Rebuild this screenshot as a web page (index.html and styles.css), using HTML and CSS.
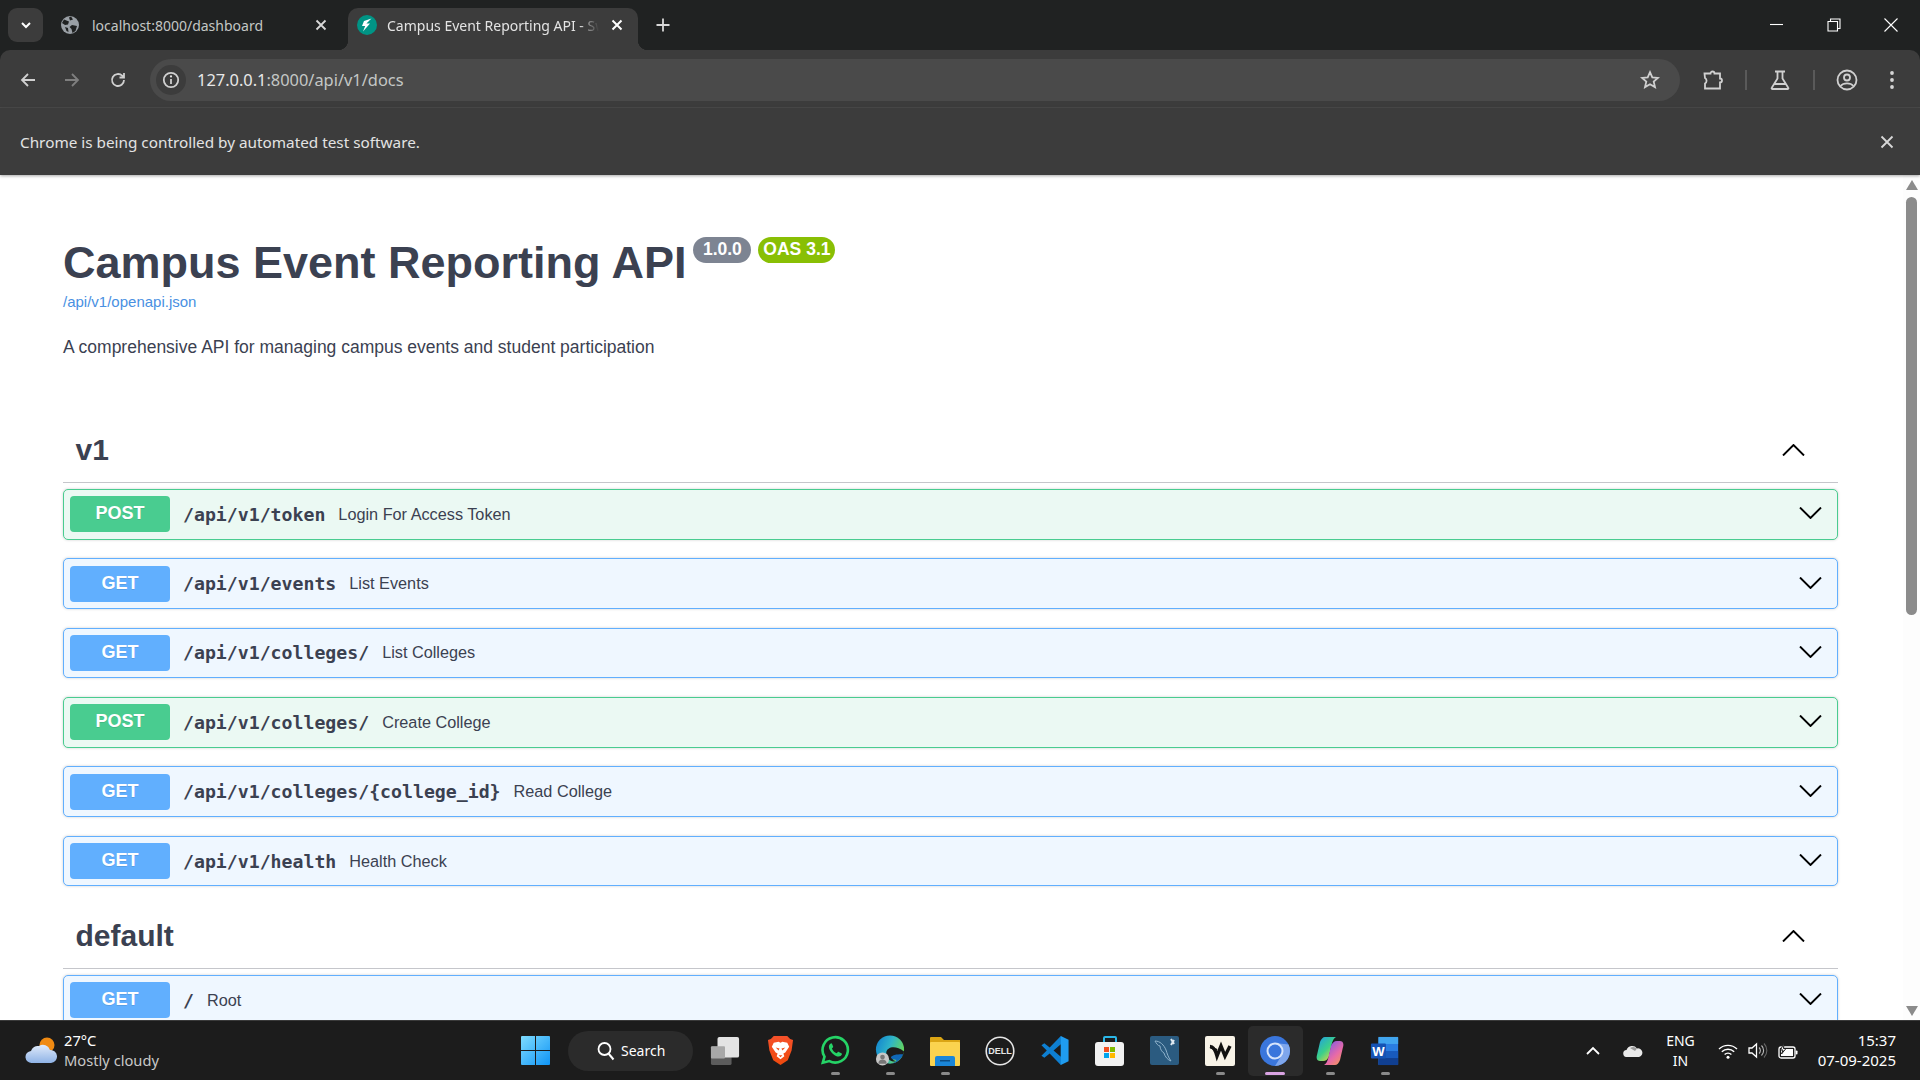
FILE: index.html
```html
<!DOCTYPE html>
<html>
    <head>
        <meta charset="utf-8">
        <title>Campus Event Reporting API - Swagger UI</title>
        <link rel="stylesheet" href="styles.css">
    </head>
    <body>
        <div class="tabstrip">
            <button class="tab-search">
                <svg width="14" height="14" viewBox="0 0 14 14"><path class="stroke-white" d="M3 5l4 4 4-4"/></svg>
            </button>
            <div class="tab">
                <svg class="favicon" width="20" height="20" viewBox="0 0 20 20"><circle cx="10" cy="10" r="9" fill="#9aa0a6"/><path fill="#202222" d="M4 4.5 9 6.5l-1 3-3 .5-3-2zM11 1.5l2 3-3 1-1-3zM12 10l5 1-1.5 5-3 2-1-4-2-2zM5 12l3 1 .5 4-2-1z"/></svg>
                <span class="tab-title">localhost:8000/dashboard</span>
                <svg class="tab-close" width="12" height="12" viewBox="0 0 12 12"><path class="stroke-light" d="M1.5 1.5l9 9M10.5 1.5l-9 9"/></svg>
            </div>
            <div class="tab tab--active">
                <svg class="favicon" width="20" height="20" viewBox="0 0 20 20"><circle cx="10" cy="10" r="10" fill="#009485"/><path fill="#fff" d="M14.5 3.5 7 6l-2 5h3.2L6 16.5l7-8h-3.6z"/></svg>
                <span class="tab-title tab-title--fade">Campus Event Reporting API - Swagger UI</span>
                <svg class="tab-close" width="12" height="12" viewBox="0 0 12 12"><path class="stroke-white" d="M1.5 1.5l9 9M10.5 1.5l-9 9"/></svg>
            </div>
            <svg class="tab-new" width="16" height="16" viewBox="0 0 16 16"><path class="stroke-light" d="M8 1.5v13M1.5 8h13"/></svg>
            <div class="window-controls">
                <svg width="14" height="14" viewBox="0 0 14 14"><path class="stroke-thin" d="M0 6.5h13"/></svg>
                <svg width="14" height="14" viewBox="0 0 14 14"><path class="stroke-thin" d="M1 3.5h9.5V13H1zM3.5 3.5V1H13v9.5h-2.5"/></svg>
                <svg width="14" height="14" viewBox="0 0 14 14"><path class="stroke-thin" d="M.5.5l13 13M13.5.5l-13 13"/></svg>
            </div>
        </div>

        <div class="toolbar">
            <button class="tool">
                <svg width="18" height="18" viewBox="0 0 18 18"><path class="stroke-icon" d="M16 9H3M9 3 3 9l6 6"/></svg>
            </button>
            <button class="tool tool--off">
                <svg width="18" height="18" viewBox="0 0 18 18"><path class="stroke-icon" d="M2 9h13M9 3l6 6-6 6"/></svg>
            </button>
            <button class="tool tool--reload">
                <svg width="18" height="18" viewBox="0 0 18 18"><path class="stroke-icon" d="M15 9a6 6 0 1 1-1.8-4.3L15 6.5M15 2v4.5h-4.5"/></svg>
            </button>
            <div class="omnibox">
                <span class="site-info">
                    <svg width="18" height="18" viewBox="0 0 18 18"><circle class="stroke-icon" cx="9" cy="9" r="7.2"/><path class="stroke-icon" d="M9 8v5"/><circle cx="9" cy="5.4" r="1.1" fill="#e3e3e3"/></svg>
                </span>
                <span class="url"><span class="url-host">127.0.0.1</span>:8000/api/v1/docs</span>
                <svg class="star" width="20" height="20" viewBox="0 0 20 20"><path class="stroke-icon" d="M10 2.2l2.3 5.2 5.6.5-4.2 3.7 1.3 5.5L10 14.2l-5 2.9 1.3-5.5-4.2-3.7 5.6-.5z"/></svg>
            </div>
            <button class="tool tool--action tool--puzzle">
                <svg width="22" height="22" viewBox="0 0 22 22"><path class="stroke-icon" d="M2.5 4.5H8.500a2 2 0 0 1 4 0h5.500v5a2 2 0 0 1 0 4v6H3v-5a3.200 3.200 0 0 0 0-5.500z"/></svg>
            </button>
            <span class="tool-divider"></span>
            <button class="tool tool--action tool--flask">
                <svg width="22" height="22" viewBox="0 0 22 22"><path class="stroke-icon" d="M6 2.500h10M8.500 2.500v7L2.800 18.700a.8.8 0 0 0 .7 1.300h15a.8.8 0 0 0 .7-1.300L13.500 9.500v-7M6 15h10"/></svg>
            </button>
            <span class="tool-divider tool-divider--second"></span>
            <button class="tool tool--action tool--profile">
                <svg width="22" height="22" viewBox="0 0 22 22"><circle class="stroke-icon" cx="11" cy="11" r="9.500"/><circle class="stroke-icon" cx="11" cy="8.500" r="3"/><path class="stroke-icon" d="M4.500 17c3-3.500 10-3.500 13 0"/></svg>
            </button>
            <button class="tool tool--action tool--menu">
                <svg width="6" height="20" viewBox="0 0 6 20"><circle cx="3" cy="3" r="1.900" fill="#d5d5d5"/><circle cx="3" cy="10" r="1.900" fill="#d5d5d5"/><circle cx="3" cy="17" r="1.900" fill="#d5d5d5"/></svg>
            </button>
        </div>

        <div class="infobar">
            <span>Chrome is being controlled by automated test software.</span>
            <svg width="14" height="14" viewBox="0 0 14 14"><path class="stroke-light" d="M1.500 1.500l11 11M12.500 1.500l-11 11"/></svg>
        </div>

        <div class="viewport">
            <main class="swagger">
                <div class="info-title">
                    <h1>Campus Event Reporting API</h1>
                    <span class="badge badge--version">1.0.0</span>
                    <span class="badge badge--oas">OAS 3.1</span>
                </div>
                <a class="spec-link">/api/v1/openapi.json</a>
                <p class="info-desc">A comprehensive API for managing campus events and student participation</p>

                <section class="tag-section tag-section--first">
                    <div class="tag-head">
                        <h3>v1</h3>
                        <svg width="23" height="12" viewBox="0 0 23 12"><path class="stroke-chevron" d="M1 11.500 11.500 1 22 11.500"/></svg>
                    </div>
                    <div class="op op--post">
                        <span class="method">POST</span>
                        <span class="path">/api/v1/token</span>
                        <span class="summary">Login For Access Token</span>
                        <svg class="op-chevron" width="23" height="12" viewBox="0 0 23 12"><path class="stroke-chevron" d="M1 .5 11.500 11 22 .5"/></svg>
                    </div>
                    <div class="op op--get">
                        <span class="method">GET</span>
                        <span class="path">/api/v1/events</span>
                        <span class="summary">List Events</span>
                        <svg class="op-chevron" width="23" height="12" viewBox="0 0 23 12"><path class="stroke-chevron" d="M1 .5 11.500 11 22 .5"/></svg>
                    </div>
                    <div class="op op--get">
                        <span class="method">GET</span>
                        <span class="path">/api/v1/colleges/</span>
                        <span class="summary">List Colleges</span>
                        <svg class="op-chevron" width="23" height="12" viewBox="0 0 23 12"><path class="stroke-chevron" d="M1 .5 11.500 11 22 .5"/></svg>
                    </div>
                    <div class="op op--post">
                        <span class="method">POST</span>
                        <span class="path">/api/v1/colleges/</span>
                        <span class="summary">Create College</span>
                        <svg class="op-chevron" width="23" height="12" viewBox="0 0 23 12"><path class="stroke-chevron" d="M1 .5 11.500 11 22 .5"/></svg>
                    </div>
                    <div class="op op--get">
                        <span class="method">GET</span>
                        <span class="path">/api/v1/colleges/{college_id}</span>
                        <span class="summary">Read College</span>
                        <svg class="op-chevron" width="23" height="12" viewBox="0 0 23 12"><path class="stroke-chevron" d="M1 .5 11.500 11 22 .5"/></svg>
                    </div>
                    <div class="op op--get">
                        <span class="method">GET</span>
                        <span class="path">/api/v1/health</span>
                        <span class="summary">Health Check</span>
                        <svg class="op-chevron" width="23" height="12" viewBox="0 0 23 12"><path class="stroke-chevron" d="M1 .5 11.500 11 22 .5"/></svg>
                    </div>
                </section>

                <section class="tag-section">
                    <div class="tag-head">
                        <h3>default</h3>
                        <svg width="23" height="12" viewBox="0 0 23 12"><path class="stroke-chevron" d="M1 11.500 11.500 1 22 11.500"/></svg>
                    </div>
                    <div class="op op--get">
                        <span class="method">GET</span>
                        <span class="path">/</span>
                        <span class="summary">Root</span>
                        <svg class="op-chevron" width="23" height="12" viewBox="0 0 23 12"><path class="stroke-chevron" d="M1 .5 11.500 11 22 .5"/></svg>
                    </div>
                </section>
            </main>
            <div class="scrollbar">
                <span class="scroll-arrow scroll-arrow--up"></span>
                <span class="scroll-thumb"></span>
                <span class="scroll-arrow scroll-arrow--down"></span>
            </div>
        </div>

        <footer class="taskbar">
            <div class="weather">
                <svg width="32" height="30" viewBox="0 0 32 30">
                    <defs><linearGradient id="cloud" x1="0" y1="0" x2="0" y2="1"><stop offset="0" stop-color="#dfeafa"/><stop offset="1" stop-color="#8fb3e6"/></linearGradient></defs>
                    <circle cx="22" cy="9" r="7.500" fill="#f08a12"/>
                    <path fill="url(#cloud)" d="M7 27a6 6 0 0 1-1-12 7 7 0 0 1 8-5 7.500 7.500 0 0 1 11 4 6.500 6.500 0 0 1 1 13z"/>
                </svg>
                <div class="weather-text">
                    <span class="weather-temp">27°C</span>
                    <span class="weather-desc">Mostly cloudy</span>
                </div>
            </div>
            <svg class="start" width="29" height="29" viewBox="0 0 29 29">
                <defs><linearGradient id="win" x1="0" y1="0" x2="1" y2="1"><stop offset="0" stop-color="#7fdcff"/><stop offset="1" stop-color="#0f94f5"/></linearGradient></defs>
                <path fill="url(#win)" d="M0 1a1 1 0 0 1 1-1h13v14H0zM15 0h13a1 1 0 0 1 1 1v13H15zM0 15h14v14H1a1 1 0 0 1-1-1zM15 15h14v13a1 1 0 0 1-1 1H15z"/>
            </svg>
            <div class="search-pill">
                <svg width="18" height="20" viewBox="0 0 18 20"><circle cx="7.500" cy="8" r="6" fill="none" stroke="#fff" stroke-width="1.800"/><path d="M11.500 12.500l5 6" stroke="#fff" stroke-width="2" fill="none"/></svg>
                <span>Search</span>
            </div>
            <div class="apps">
                <span class="app">
                    <svg width="30" height="30" viewBox="0 0 32 32"><rect x="1" y="11" width="22" height="20" rx="2" fill="#5c5c5c"/><rect x="8" y="1" width="23" height="22" rx="2" fill="#e4e4e4"/><rect x="1" y="11" width="15" height="13" rx="1" fill="#a8a8a8"/></svg>
                </span>
                <span class="app">
                    <svg width="27" height="31" viewBox="0 0 28 32">
                        <defs><linearGradient id="brave" x1="0" y1="0" x2="0" y2="1"><stop offset="0" stop-color="#f5512a"/><stop offset="1" stop-color="#ef4a0e"/></linearGradient></defs>
                        <path fill="url(#brave)" d="M7 1h14l3 3 3 1-1.500 11-4 10L14 31l-7.500-5-4-10L1 5l3-1z"/>
                        <path fill="#fff" d="M7 8l5-1 2 1 2-1 5 1 2 4-4 6-2 1 1 3-4 3-4-3 1-3-2-1-4-6z"/>
                        <path fill="#f1501f" d="M9 13l4 1-1 2zM19 13l-4 1 1 2zM12 21h4l-2 2z"/>
                    </svg>
                </span>
                <span class="app app--open">
                    <svg width="30" height="31" viewBox="0 0 32 32"><path fill="none" stroke="#25d366" stroke-width="2.800" d="M3 29l1.800-6.500A13.500 13.500 0 1 1 10 27.300z"/><path fill="#25d366" d="M11.500 8.500c-1.500 1-2.500 2.500-1.800 5 1 3.500 5 7.800 8.800 8.800 2.500.6 4-.5 4.800-2 .3-.6 0-1-.5-1.300l-2.800-1.500c-.5-.2-.9 0-1.200.4l-.9 1.100c-2.600-1-4.200-2.700-5.200-5.100l1-1c.4-.4.500-.8.300-1.200l-1.200-2.800c-.3-.6-.8-.7-1.300-.4z"/></svg>
                </span>
                <span class="app app--open">
                    <svg width="30" height="31" viewBox="0 0 32 32">
                        <defs><linearGradient id="edge" x1="0" y1="0" x2="1" y2=".4"><stop offset="0" stop-color="#0f7fd0"/><stop offset=".55" stop-color="#2fb4c8"/><stop offset="1" stop-color="#63d45f"/></linearGradient></defs>
                        <circle cx="16" cy="15" r="15" fill="url(#edge)"/>
                        <path fill="#1c1c1c" d="M12 18c1-6 10-8 19-1-.3 2-1 4-2.500 6-4-3-10-2.500-10 1 0 2 2 3 4 3.500-5 1-11-3-10.500-9.500z"/>
                        <path fill="#1068b8" d="M30 20c-2 6-8 10-14 10 3 0 6-2 7-4-3 0-6-1-6-3 2-3 9-3 13-3z"/>
                        <circle cx="8" cy="25" r="7" fill="#c8c8c8"/><circle cx="8" cy="23" r="2.500" fill="#777"/><path fill="#777" d="M3.500 30c0-6 9-6 9 0z"/>
                    </svg>
                </span>
                <span class="app app--open">
                    <svg width="30" height="32" viewBox="0 0 30 32"><path fill="#dba514" d="M0 3a1 1 0 0 1 1-1h10l3 3h16v6H0z"/><rect y="7" width="30" height="24" rx="1" fill="#fbd34f"/><path fill="#1a86d8" d="M5 23a2 2 0 0 1 2-2h16a2 2 0 0 1 2 2v8H5z"/><rect x="10" y="25" width="10" height="1.500" fill="#0c4e86"/></svg>
                </span>
                <span class="app">
                    <svg width="30" height="30" viewBox="0 0 30 30"><circle cx="15" cy="15" r="13.800" fill="none" stroke="#e6e6e6" stroke-width="1.600"/><text class="dell-text" x="15" y="18">DELL</text></svg>
                </span>
                <span class="app">
                    <svg width="30" height="31" viewBox="0 0 30 32">
                        <path fill="#0e7fd1" d="M21 1 9.500 13 4 8.500 1 10.500 6.500 16 1 21.500 4 23.500 9.500 19 21 31 24 26V6zM21 9.500v13L13.500 16z" fill-rule="evenodd"/>
                        <path fill="#1f9cf0" d="M21 1l8 4v22l-8 4z"/>
                    </svg>
                </span>
                <span class="app">
                    <svg width="30" height="32" viewBox="0 0 30 32"><path fill="none" stroke="#2bb7e8" stroke-width="2" d="M9 7V3a1 1 0 0 1 1-1h10a1 1 0 0 1 1 1v4"/><rect y="7" width="29" height="24" rx="3" fill="#f2f2f2"/><rect x="9" y="12" width="5" height="5" fill="#f25022"/><rect x="15" y="12" width="5" height="5" fill="#7fba00"/><rect x="9" y="18" width="5" height="5" fill="#00a4ef"/><rect x="15" y="18" width="5" height="5" fill="#ffb900"/></svg>
                </span>
                <span class="app">
                    <svg width="30" height="30" viewBox="0 0 30 30"><rect width="29" height="29" rx="2" fill="#2b5b80"/><path fill="none" stroke="#8fb2cb" stroke-width="1" d="M5 5c5 0 9 4 11 9 1 3 2 7 5 11-3-1-6-4-7-8-2-1-4-4-4-7-2 0-4-3-5-5z"/><path stroke="#dfe8ef" stroke-width="2" d="M21 3l3 5M24 4l-3 5"/></svg>
                </span>
                <span class="app app--open">
                    <svg width="30" height="30" viewBox="0 0 30 30"><rect width="30" height="30" rx="2" fill="#f8f3e8"/><path fill="none" stroke="#111" stroke-width="2" d="M5 11l7 3"/><path fill="none" stroke="#111" stroke-width="3.400" d="M5 10.500c3 0 5 2 7 9.500l4-10 4 10 5-10"/></svg>
                </span>
                <span class="app app--active">
                    <svg width="30" height="30" viewBox="0 0 30 30"><circle cx="15" cy="15" r="15" fill="#3a76dc"/><path fill="#7ea6ec" d="M15 7a8 8 0 0 1 6.900 12L15 30a15 15 0 0 0 13.500-21.500z"/><circle cx="15" cy="15" r="7.500" fill="#3a76dc" stroke="#d6e4fb" stroke-width="2"/></svg>
                </span>
                <span class="app app--open">
                    <svg width="28" height="30" viewBox="0 0 28 30">
                        <defs><linearGradient id="copA" x1="0" y1="0" x2=".8" y2="1"><stop offset="0" stop-color="#1f9be8"/><stop offset=".55" stop-color="#3bd08a"/><stop offset="1" stop-color="#f5d63d"/></linearGradient><linearGradient id="copB" x1=".2" y1="0" x2="1" y2="1"><stop offset="0" stop-color="#7a5ae8"/><stop offset=".55" stop-color="#e86aa8"/><stop offset="1" stop-color="#f5a04a"/></linearGradient></defs>
                        <path fill="url(#copA)" d="M9 1h11c-2 1-3 3-4 6l-3 13c-1 3-3 5-6 5H4c-3 0-4-3-3-6L4 6c1-3 3-5 5-5z"/>
                        <path fill="url(#copB)" d="M19 29H8c2-1 3-3 4-6l3-13c1-3 3-5 6-5h3c3 0 4 3 3 6l-3 13c-1 3-3 5-5 5z"/>
                    </svg>
                </span>
                <span class="app app--open">
                    <svg width="30" height="30" viewBox="0 0 30 32"><rect x="8" y="1" width="21" height="30" rx="1" fill="#2a7de1"/><rect x="8" y="1" width="21" height="7.500" fill="#41a5ee"/><rect x="8" y="16" width="21" height="7.500" fill="#185abd"/><rect x="8" y="23.500" width="21" height="7.500" fill="#103f91"/><rect y="8" width="16" height="16" rx="1" fill="#1553b4"/><text class="word-text" x="8" y="21">W</text></svg>
                </span>
            </div>
            <div class="tray">
                <svg class="tray-chevron" width="14" height="9" viewBox="0 0 14 9"><path d="M1 8l6-6 6 6" fill="none" stroke="#fff" stroke-width="1.800"/></svg>
                <svg class="tray-cloud" width="20" height="13" viewBox="0 0 20 13"><path fill="#e9e9e9" d="M4 13a3.500 3.500 0 0 1-.5-7A6 6 0 0 1 14 4.500 4.300 4.300 0 0 1 16 13z"/><path fill="#9b9b9b" d="M7 4a6 6 0 0 1 7 .5l-2 2.500z"/></svg>
                <div class="tray-lang"><span>ENG</span><span>IN</span></div>
                <svg class="tray-wifi" width="20" height="16" viewBox="0 0 20 16"><g fill="none" stroke="#fff" stroke-width="1.400"><path d="M1 6a13 13 0 0 1 18 0"/><path d="M3.800 8.800a9 9 0 0 1 12.400 0"/><path d="M6.600 11.500a5 5 0 0 1 6.800 0"/></g><circle cx="10" cy="14.200" r="1.500" fill="#fff"/></svg>
                <svg class="tray-volume" width="20" height="17" viewBox="0 0 20 17"><path fill="none" stroke="#fff" stroke-width="1.300" d="M1 6h3l4.500-4v13L4 11H1z"/><path fill="none" stroke="#bbb" stroke-width="1.100" d="M11 5.500a4 4 0 0 1 0 6M13.500 3.500a7 7 0 0 1 0 10"/><path fill="none" stroke="#666" stroke-width="1.100" d="M16 1.500a10 10 0 0 1 0 14"/></svg>
                <svg class="tray-battery" width="20" height="16" viewBox="0 0 20 16"><rect x="1" y="4" width="16" height="11" rx="2" fill="none" stroke="#fff" stroke-width="1.300"/><rect x="3" y="6" width="12" height="7" fill="#fff"/><rect x="17.800" y="7.500" width="1.700" height="4" rx=".8" fill="#fff"/><path fill="#fff" stroke="#1c1c1c" d="M6 0 2.500 7H5L3.500 11 8 5.500H5.500z"/></svg>
                <div class="tray-clock"><span>15:37</span><span>07-09-2025</span></div>
            </div>
        </footer>
    </body>
</html>
```

FILE: styles.css
```css
* {
    box-sizing: border-box;
}

html,
body {
    margin: 0;
    height: 100%;
    overflow: hidden;
}

body {
    display: flex;
    flex-direction: column;
    width: 1920px;
    height: 1080px;
    background-color: #202222;
    font-family: "Noto Sans", sans-serif;
}

button {
    padding: 0;
    border: none;
    background: none;
    display: flex;
    align-items: center;
    justify-content: center;
}

svg {
    flex-shrink: 0;
    display: block;
}

.stroke-white,
.stroke-light,
.stroke-thin,
.stroke-icon {
    fill: none;
}

.stroke-white {
    stroke: #fff;
    stroke-width: 2;
}

.stroke-light {
    stroke: #d8d8d8;
    stroke-width: 1.8;
}

.stroke-thin {
    stroke: #fff;
    stroke-width: 1.1;
}

.stroke-icon {
    stroke: #d0d0d0;
    stroke-width: 1.8;
}

.stroke-chevron {
    fill: none;
    stroke: #000;
    stroke-width: 1.9;
}

/* tab strip */
.tabstrip {
    display: flex;
    align-items: flex-end;
    height: 50px;
    padding-left: 8px;
    background-color: #202222;
}

.tab-search {
    width: 35px;
    height: 34px;
    margin-bottom: 8px;
    border-radius: 9px;
    background-color: #3c3c3c;
}

.tab {
    display: flex;
    align-items: center;
    width: 305px;
    height: 42px;
    padding: 0 0 8px 17px;
    color: #c4c7c5;
    font-size: 14px;
}

.tab--active {
    position: relative;
    width: 290px;
    padding-left: 9px;
    border-radius: 10px 10px 0 0;
    background-color: #3c3c3c;
    color: #e3e3e3;
}

.tab--active::before,
.tab--active::after {
    content: "";
    position: absolute;
    bottom: 0;
    width: 10px;
    height: 10px;
}

.tab--active::before {
    left: -10px;
    background: radial-gradient(circle at 0 0, transparent 10px, #3c3c3c 10.5px);
}

.tab--active::after {
    right: -10px;
    background: radial-gradient(circle at 100% 0, transparent 10px, #3c3c3c 10.5px);
}

.tab-title {
    margin-left: 12px;
    width: 212px;
    white-space: nowrap;
    overflow: hidden;
}

.tab-title--fade {
    margin-left: 10px;
    -webkit-mask-image: linear-gradient(90deg, #000 192px, transparent 212px);
    mask-image: linear-gradient(90deg, #000 192px, transparent 212px);
}

.tab .tab-close {
    margin-left: 11px;
}

.tab--active .tab-close {
    margin-left: 12px;
}

.tab-new {
    margin: 0 0 17px 17px;
}

.window-controls {
    display: flex;
    gap: 43px;
    margin: 0 22px 18px auto;
}

/* toolbar */
.toolbar {
    display: flex;
    align-items: center;
    height: 58px;
    padding: 2px 0 0 6px;
    border-radius: 10px 10px 0 0;
    border-bottom: 1px solid #4b4b4b;
    background-color: #3c3c3c;
}

.tool {
    width: 44px;
    height: 36px;
}

.tool--off {
    opacity: 0.45;
}

.tool--reload {
    margin-left: 2px;
}

.omnibox {
    display: flex;
    align-items: center;
    width: 1530px;
    height: 42px;
    margin-left: 10px;
    padding: 0 20px 0 6px;
    border-radius: 21px;
    background-color: #4a4a4a;
}

.site-info {
    display: flex;
    align-items: center;
    justify-content: center;
    width: 30px;
    height: 30px;
    border-radius: 50%;
    background-color: #3c3c3c;
}

.url {
    margin-left: 11px;
    color: #c4c7c5;
    font-size: 16.4px;
}

.url-host {
    color: #e8e8e8;
}

.star {
    margin-left: auto;
}

.tool--action {
    width: 34px;
}

.tool--puzzle {
    margin-left: 16px;
}

.tool-divider {
    width: 2px;
    height: 20px;
    margin-left: 15px;
    background-color: #5a5a5a;
}

.tool--flask {
    margin-left: 16px;
}

.tool-divider--second {
    margin-left: 16px;
}

.tool--profile {
    margin-left: 15px;
}

.tool--menu {
    margin-left: 11px;
}

/* info bar */
.infobar {
    display: flex;
    align-items: center;
    justify-content: space-between;
    height: 67px;
    padding: 0 26px 0 20px;
    background-color: #3c3c3c;
    color: #e3e3e3;
    font-size: 15.3px;
    position: relative;
    z-index: 1;
    box-shadow: 0 1px 3px rgba(0, 0, 0, 0.35);
}

/* page */
.viewport {
    display: flex;
    flex: 1;
    min-height: 0;
    overflow: hidden;
    background-color: #fff;
}

.swagger {
    flex: 1;
    padding: 60px 65px 0 63px;
    color: #3b4151;
    font-family: "Liberation Sans", Arial, sans-serif;
}

.info-title {
    display: flex;
    align-items: flex-start;
    gap: 7px;
    height: 54px;
}

.info-title h1 {
    margin: 1px 0 0;
    font-size: 45px;
    line-height: 54px;
    font-weight: 700;
}

.badge {
    height: 26px;
    margin-top: 2px;
    padding: 0 9.5px;
    border-radius: 13px;
    color: #fff;
    font-size: 17.5px;
    font-weight: 700;
    line-height: 25px;
}

.badge--version {
    background-color: #7d8492;
}

.badge--oas {
    padding: 0 5px;
    background-color: #89bf04;
}

.spec-link {
    display: block;
    margin-top: 3px;
    color: #4990e2;
    font-size: 15px;
    line-height: 20px;
}

.info-desc {
    margin: 21.5px 0 0;
    font-size: 17.5px;
    line-height: 26px;
}

.tag-section--first {
    margin-top: 59.5px;
}

.tag-head {
    display: flex;
    align-items: center;
    justify-content: space-between;
    height: 64px;
    margin-bottom: 6px;
    padding: 0 33px 1px 12.5px;
    border-bottom: 1.5px solid #c5c6cb;
}

.tag-head h3 {
    margin: 0;
    font-size: 30px;
    font-weight: 700;
}

.op {
    display: flex;
    align-items: center;
    height: 50.6px;
    margin-bottom: 18.75px;
    padding: 0 15px 0 6px;
    border: 1.5px solid;
    border-radius: 5px;
    box-shadow: 0 0 3px rgba(0, 0, 0, 0.19);
}

.op--post {
    border-color: #49cc90;
    background-color: #ebf9f3;
}

.op--get {
    border-color: #61affe;
    background-color: #eff7ff;
}

.method {
    width: 100px;
    height: 36px;
    border-radius: 4px;
    color: #fff;
    font-size: 18px;
    font-weight: 700;
    line-height: 35px;
    text-align: center;
    text-shadow: 0 1px 0 rgba(0, 0, 0, 0.1);
}

.op--post .method {
    background-color: #49cc90;
}

.op--get .method {
    background-color: #61affe;
}

.path {
    margin-left: 13px;
    font-family: "DejaVu Sans Mono", monospace;
    font-size: 18.2px;
    font-weight: 700;
}

.summary {
    margin-left: 13px;
    font-size: 16.25px;
}

.op-chevron {
    margin: 0 0 2px auto;
}

/* scrollbar */
.scrollbar {
    display: flex;
    flex-direction: column;
    align-items: center;
    width: 17px;
    padding-top: 5px;
    background-color: #fdfdfd;
}

.scroll-thumb {
    width: 11px;
    height: 418px;
    margin-top: 7px;
    border-radius: 6px;
    background-color: #8b8b8b;
}

.scroll-arrow {
    width: 0;
    height: 0;
    border-left: 6px solid transparent;
    border-right: 6px solid transparent;
}

.scroll-arrow--up {
    border-bottom: 10px solid #8b8b8b;
}

.scroll-arrow--down {
    margin-top: auto;
    margin-bottom: 4px;
    border-top: 10px solid #8b8b8b;
}

/* taskbar */
.taskbar {
    display: flex;
    align-items: center;
    height: 60px;
    border-top: 1px solid #3a3a3a;
    background-color: #1c1c1c;
    color: #fff;
    font-size: 14px;
}

.weather {
    display: flex;
    align-items: center;
    gap: 7px;
    width: 521px;
    padding-left: 25px;
}

.weather-text {
    display: flex;
    flex-direction: column;
    margin-bottom: 2px;
    font-size: 14.7px;
    line-height: 20px;
}

.weather-desc {
    color: #c8c8c8;
}

.search-pill {
    display: flex;
    align-items: center;
    gap: 6px;
    width: 125px;
    height: 40px;
    margin-left: 18px;
    padding-left: 29px;
    border-radius: 20px;
    background-color: #2b2b2b;
}

.apps {
    display: flex;
    margin-left: 4.5px;
}

.app {
    position: relative;
    display: flex;
    align-items: center;
    justify-content: center;
    width: 55px;
    height: 50px;
}

.app--open::after,
.app--active::after {
    content: "";
    position: absolute;
    left: 50%;
    bottom: 1px;
    width: 9px;
    height: 3px;
    margin-left: -4.5px;
    border-radius: 2px;
    background-color: #8a8a8a;
}

.app--active {
    border-radius: 5px;
    background-color: #2b2b2b;
}

.app--active::after {
    width: 20px;
    margin-left: -10px;
    background-color: #d9a3e2;
}

.dell-text {
    fill: #e6e6e6;
    font-family: "Liberation Sans", sans-serif;
    font-size: 9px;
    font-weight: 700;
    text-anchor: middle;
}

.word-text {
    fill: #fff;
    font-family: "Liberation Sans", sans-serif;
    font-size: 14px;
    font-weight: 700;
    text-anchor: middle;
}

.tray {
    display: flex;
    align-items: center;
    flex: 1;
    padding-right: 24px;
}

.tray-chevron {
    margin-left: 173px;
}

.tray-cloud {
    margin-left: 23px;
}

.tray-lang {
    display: flex;
    flex-direction: column;
    align-items: center;
    width: 40px;
    margin-left: 18px;
    line-height: 20px;
}

.tray-wifi {
    margin-left: 17px;
}

.tray-volume {
    margin-left: 10px;
}

.tray-battery {
    margin-left: 10px;
}

.tray-clock {
    display: flex;
    flex-direction: column;
    align-items: flex-end;
    margin: 0 0 2px auto;
    font-size: 15px;
    line-height: 20px;
}
```
